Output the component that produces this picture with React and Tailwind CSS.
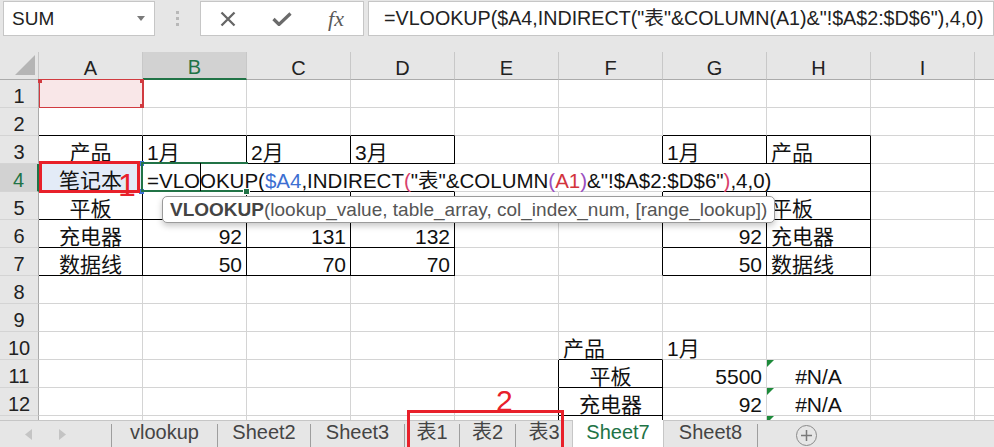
import React from 'react';

const COLS = ['A', 'B', 'C', 'D', 'E', 'F', 'G', 'H', 'I', 'J'];
const ROWS = [1, 2, 3, 4, 5, 6, 7, 8, 9, 10, 11, 12, 13];

// [text, align]  c = centre, l = left, r = right
const CELLS = {
  '3-0': ['产品', 'c'],
  '3-1': ['1月', 'l'],
  '3-2': ['2月', 'l'],
  '3-3': ['3月', 'l'],
  '3-6': ['1月', 'l'],
  '3-7': ['产品', 'l'],
  '4-0': ['笔记本', 'c'],
  '5-0': ['平板', 'c'],
  '5-7': ['平板', 'l'],
  '6-0': ['充电器', 'c'],
  '6-1': ['92', 'r'],
  '6-2': ['131', 'r'],
  '6-3': ['132', 'r'],
  '6-6': ['92', 'r'],
  '6-7': ['充电器', 'l'],
  '7-0': ['数据线', 'c'],
  '7-1': ['50', 'r'],
  '7-2': ['70', 'r'],
  '7-3': ['70', 'r'],
  '7-6': ['50', 'r'],
  '7-7': ['数据线', 'l'],
  '10-5': ['产品', 'l'],
  '10-6': ['1月', 'l'],
  '11-5': ['平板', 'c'],
  '11-6': ['5500', 'r'],
  '11-7': ['#N/A', 'c'],
  '12-5': ['充电器', 'c'],
  '12-6': ['92', 'r'],
  '12-7': ['#N/A', 'c'],
};

const ERR = ['11-7', '12-7', '13-7'];

const ALIGN = {
  c: 'justify-center',
  l: 'justify-start pl-[4px]',
  r: 'justify-end pr-[4px]',
};

const inTable = (r, c) =>
  (r >= 3 && r <= 7 && (c <= 3 || c === 6 || c === 7)) || (r >= 11 && r <= 13 && c === 5);

const TABS = [
  { name: 'vlookup', w: 'w-[105px]' },
  { name: 'Sheet2', w: 'w-[92px]' },
  { name: 'Sheet3', w: 'w-[93px]' },
  { name: '表1', w: 'w-[54px]' },
  { name: '表2', w: 'w-[55px]' },
  { name: '表3', w: 'w-[56px]' },
];

function Formula() {
  return (
    <>
      =VLO
      <span className="relative">
        <span className="absolute left-0 top-[-6px] h-[28px] w-px bg-black" />
      </span>
      OKUP(
      <span className="text-[#3d6fd2]">$A4</span>
      ,INDIRECT
      <span className="text-[#d8406c]">(</span>
      {'"表"&COLUMN'}
      <span className="text-[#9a4fc0]">(</span>
      <span className="text-[#d2343c]">A1</span>
      <span className="text-[#9a4fc0]">)</span>
      {'&"!$A$2:$D$6"'}
      <span className="text-[#d8406c]">)</span>
      ,4,0)
    </>
  );
}

function Cell({ r, c }) {
  const key = `${r}-${c}`;
  const data = CELLS[key];
  const overflow = r === 4 && c >= 1 && c <= 6;
  const right = overflow
    ? 'border-r-transparent'
    : inTable(r, c) || inTable(r, c + 1)
    ? 'border-r-black'
    : 'border-r-[#d4d4d4]';
  const bottom = inTable(r, c) || inTable(r + 1, c) ? 'border-b-black' : 'border-b-[#d4d4d4]';
  let bg = '';
  if (key === '1-0') bg = 'bg-[#f9e7e8]';
  if (key === '4-0') bg = 'bg-[#e3ebf7]';

  return (
    <div
      className={`relative flex w-[104px] shrink-0 items-end border-r border-b ${right} ${bottom} ${bg} ${
        data ? ALIGN[data[1]] : ''
      }`}
    >
      {ERR.includes(key) && (
        <span className="absolute left-0 top-0 h-0 w-0 border-t-[7px] border-r-[7px] border-t-[#1d8a3a] border-r-transparent" />
      )}
      {data && <span className="whitespace-nowrap leading-none">{data[0]}</span>}
      {key === '4-1' && (
        <span className="relative z-10 whitespace-nowrap pl-[4px] text-[20.5px] leading-none">
          <Formula />
        </span>
      )}
    </div>
  );
}

export default function App() {
  return (
    <div className="relative h-[447px] w-[994px] overflow-hidden bg-white font-['Liberation_Sans','Noto_Sans_CJK_SC',sans-serif] text-[#111]">
      {/* Formula bar */}
      <div className="flex h-[52px] items-start bg-[#e6e6e6] pt-[1px]">
        <div className="ml-[3px] flex h-[35px] w-[152px] items-center justify-between border border-[#c6c6c6] bg-white pl-[8px] pr-[9px]">
          <span className="text-[19px] leading-none text-[#222]">SUM</span>
          <svg width="8" height="5" viewBox="0 0 8 5">
            <path d="M0 0h8L4 5z" fill="#7a7a7a" />
          </svg>
        </div>
        <div className="flex h-[35px] w-[45px] flex-col items-center justify-center gap-[3px]">
          <span className="h-[3px] w-[3px] bg-[#b8b8b8]" />
          <span className="h-[3px] w-[3px] bg-[#b8b8b8]" />
          <span className="h-[3px] w-[3px] bg-[#b8b8b8]" />
        </div>
        <div className="flex h-[35px] w-[164px] items-center border border-[#c6c6c6] bg-white">
          <div className="flex w-[54px] justify-center">
            <svg width="16" height="16" viewBox="0 0 16 16">
              <path d="M1.5 1.5l13 13M14.5 1.5l-13 13" stroke="#666" strokeWidth="2.3" />
            </svg>
          </div>
          <div className="flex w-[54px] justify-center">
            <svg width="20" height="14" viewBox="0 0 20 14">
              <path d="M1.5 7l5.5 5.5L18.5 1.5" stroke="#6b6b6b" strokeWidth="3.2" fill="none" />
            </svg>
          </div>
          <div className="flex w-[54px] justify-center">
            <span className="font-['Liberation_Serif',serif] text-[22px] italic leading-none text-[#5a5a5a]">fx</span>
          </div>
        </div>
        <div className="ml-[4px] flex h-[35px] flex-1 items-center overflow-hidden whitespace-nowrap border border-[#c6c6c6] bg-white pl-[15px] text-[19.7px] leading-none text-[#222]">
          {'=VLOOKUP($A4,INDIRECT("表"&COLUMN(A1)&"!$A$2:$D$6"),4,0)'}
        </div>
      </div>

      {/* Grid */}
      <div className="relative h-[368px] overflow-hidden text-[21px]">
        <div className="flex h-[28px]">
          <div className="relative w-[39px] shrink-0 border-r border-b border-r-[#c8c8c8] border-b-[#ababab] bg-[#e6e6e6]">
            <svg className="absolute left-[15px] top-[3px]" width="20" height="20" viewBox="0 0 20 20">
              <path d="M20 0V20H0z" fill="#b5b5b5" />
            </svg>
          </div>
          {COLS.map((c, i) => (
            <div
              key={c}
              className={`flex w-[104px] shrink-0 items-end justify-center border-r border-r-[#c8c8c8] pb-[1px] text-[20px] leading-none ${
                i === 1
                  ? 'border-b-2 border-b-[#217346] bg-[#d2d2d2] text-[#217346]'
                  : 'border-b border-b-[#ababab] bg-[#e6e6e6] text-[#222]'
              }`}
            >
              {c}
            </div>
          ))}
        </div>

        {ROWS.map((r) => (
          <div key={r} className="flex h-[28px]">
            <div
              className={`flex w-[39px] shrink-0 items-end justify-center border-b border-b-[#d4d4d4] pb-[1px] text-[20px] leading-none ${
                r === 4
                  ? 'border-r-2 border-r-[#217346] bg-[#d2d2d2] text-[#217346]'
                  : 'border-r border-r-[#ababab] bg-[#e6e6e6] text-[#222]'
              }`}
            >
              {r}
            </div>
            {COLS.map((c, i) => (
              <Cell key={c} r={r} c={i} />
            ))}
          </div>
        ))}

        {/* A1 reference highlight */}
        <div className="absolute left-[39px] top-[27px] h-[29px] w-[105px] border border-r-2 border-[#d13b40]" />
        <span className="absolute left-[38px] top-[27px] h-[4px] w-[4px] bg-[#d13b40]" />
        <span className="absolute left-[140px] top-[27px] h-[4px] w-[4px] bg-[#d13b40]" />
        <span className="absolute left-[140px] top-[52px] h-[4px] w-[4px] bg-[#d13b40]" />

        {/* A4 reference corners */}
        <span className="absolute left-[139px] top-[109px] h-[5px] w-[5px] bg-[#3d6fd2]" />
        <span className="absolute left-[139px] top-[137px] h-[5px] w-[5px] bg-[#3d6fd2]" />

        {/* Active cell B4 */}
        <div className="absolute left-[141px] top-[110px] h-[30px] w-[107px] border-y-2 border-l-2 border-[#217346]" />
        <span className="absolute left-[243px] top-[136px] h-[7px] w-[7px] border border-white bg-[#217346]" />

        {/* Annotation 1 */}
        <div className="absolute left-[39px] top-[109px] h-[32px] w-[101px] border-[3px] border-[#e8202a]" />
        <span className="absolute left-[118px] top-[117px] text-[32px] leading-none text-[#e8202a]">1</span>

        {/* Function tooltip */}
        <div className="absolute left-[162px] top-[144px] z-20 flex h-[27px] w-[613px] items-center whitespace-nowrap rounded-[5px] border-[1.5px] border-[#9b9b9b] bg-white pl-[7px] text-[19px] leading-none text-[#555] shadow-[0_3px_6px_rgba(0,0,0,0.22)]">
          <span className="font-bold text-[#444]">VLOOKUP</span>(lookup_value, table_array, col_index_num, [range_lookup])
        </div>
      </div>

      {/* Sheet tabs */}
      <div className="flex h-[27px] items-stretch border-t border-[#c6c6c6] bg-[#e6e6e6] text-[20px] leading-none text-[#444]">
        <div className="flex w-[111px] shrink-0 items-center gap-[27px] pl-[25px]">
          <svg width="7" height="11" viewBox="0 0 7 11">
            <path d="M7 0V11L0 5.5z" fill="#c4c4c4" />
          </svg>
          <svg width="7" height="11" viewBox="0 0 7 11">
            <path d="M0 0V11L7 5.5z" fill="#c4c4c4" />
          </svg>
        </div>
        <span className="mt-[3px] h-[23px] w-px bg-[#9e9e9e]" />
        {TABS.map((t, i) => (
          <React.Fragment key={t.name}>
            <div className={`flex ${t.w} shrink-0 items-start justify-center pt-[1px]`}>{t.name}</div>
            {i < TABS.length - 1 && <span className="mt-[3px] h-[23px] w-px bg-[#9e9e9e]" />}
          </React.Fragment>
        ))}
        <div className="-mt-px flex h-[28px] w-[92px] shrink-0 items-start justify-center border-x border-[#c6c6c6] bg-white pt-[2px] text-[#217346]">
          Sheet7
        </div>
        <div className="flex w-[93px] shrink-0 items-start justify-center pt-[1px]">Sheet8</div>
        <span className="mt-[3px] h-[23px] w-px bg-[#9e9e9e]" />
        <div className="ml-[38px] mt-[4px] flex h-[21px] w-[21px] items-center justify-center rounded-full border-[1.5px] border-[#8a8a8a]">
          <svg width="11" height="11" viewBox="0 0 11 11">
            <path d="M5.5 0v11M0 5.5h11" stroke="#7a7a7a" strokeWidth="1.5" />
          </svg>
        </div>
      </div>

      {/* Annotation 2 */}
      <div className="absolute left-[407px] top-[410px] h-[45px] w-[157px] border-[3px] border-[#e8202a]" />
      <span className="absolute left-[496px] top-[386px] text-[30px] leading-none text-[#e8202a]">2</span>
    </div>
  );
}
